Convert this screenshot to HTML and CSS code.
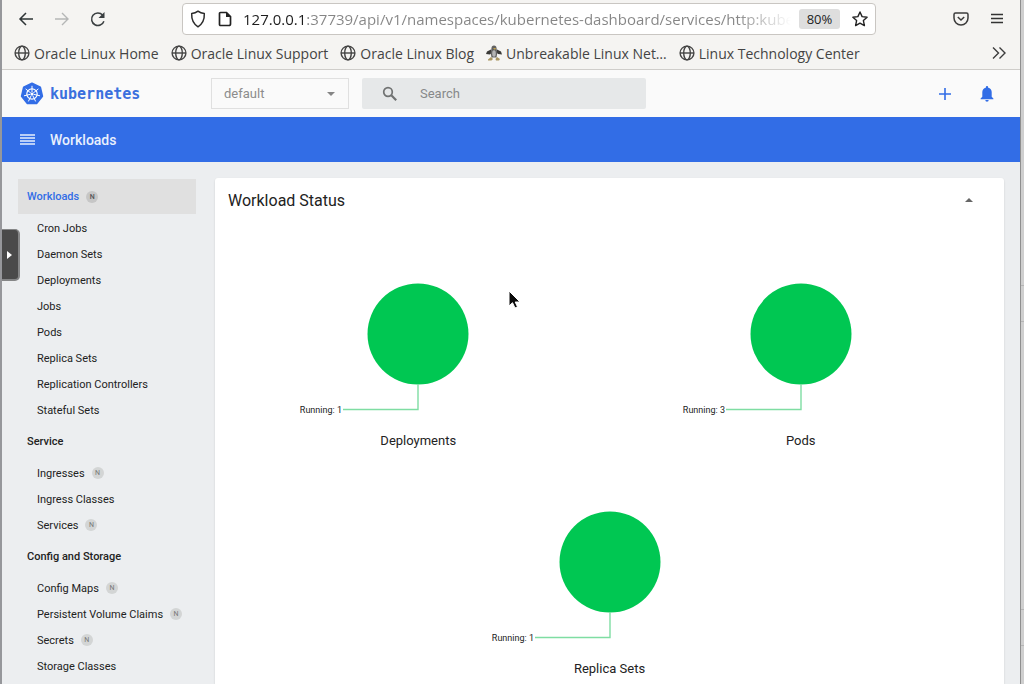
FILE: index.html
```html
<!DOCTYPE html>
<html lang="en">
<head>
<meta charset="utf-8">
<title>Kubernetes Dashboard</title>
<link rel="stylesheet" href="styles.css">
</head>
<body>
<svg class="defs" aria-hidden="true">
  <symbol id="globe" viewBox="0 0 16 16"><g fill="none" stroke="currentColor" stroke-width="1.4"><circle cx="8" cy="8" r="6.9"/><ellipse cx="8" cy="8" rx="3.3" ry="6.9"/><path d="M1 8h14"/></g></symbol>
</svg>
<div class="window">
  <div class="browser">
    <div class="toolbar">
      <div class="nav">
        <button class="icon-btn" aria-label="Back"><svg width="16" height="16" viewBox="0 0 16 16"><path d="M15 8H2M8 2L2 8l6 6" fill="none" stroke="#2e3436" stroke-width="1.5"/></svg></button>
        <button class="icon-btn" aria-label="Forward" disabled><svg width="16" height="16" viewBox="0 0 16 16"><path d="M1 8h13M8 2l6 6-6 6" fill="none" stroke="#b5b6b6" stroke-width="1.4"/></svg></button>
        <button class="icon-btn" aria-label="Reload"><svg width="16" height="16" viewBox="0 0 16 16"><path d="M13.9 10.2A6.3 6.3 0 1 1 12.6 4" fill="none" stroke="#3a3f41" stroke-width="1.5"/><path d="M14.500 1v6H8.500z" fill="#3a3f41"/></svg></button>
      </div>
      <div class="urlbar">
        <svg width="16" height="18" viewBox="0 0 16 18"><path d="M8 1.2c2 1.6 4 2.2 6.3 2.4C14.600 9.500 12.300 14 8 16.800 3.700 14 1.400 9.500 1.700 3.600 4 3.400 6 2.800 8 1.200z" fill="none" stroke="#2b2b2b" stroke-width="1.500" stroke-linejoin="round"/></svg>
        <svg width="14" height="16" viewBox="0 0 14 16"><path d="M2.500 1.500h6l4 4v7.500a1.500 1.500 0 0 1-1.500 1.500h-8.500a1 1 0 0 1-1-1v-11a1 1 0 0 1 1-1z" fill="none" stroke="#222" stroke-width="1.700"/><path d="M8 1v5h5z" fill="#222"/></svg>
        <input class="url" type="text" aria-label="Address" value="127.0.0.1:37739/api/v1/namespaces/kubernetes-dashboard/services/http:kubernetes">
        <button class="zoom">80%</button>
        <button class="icon-btn" aria-label="Bookmark this page"><svg width="16" height="16" viewBox="0 0 16 16"><path d="M8 1l2.100 4.600 5 .6-3.700 3.400 1 5L8 12.100l-4.400 2.500 1-5L.9 6.200l5-.6z" fill="none" stroke="#222" stroke-width="1.400" stroke-linejoin="round"/></svg></button>
      </div>
      <div class="actions">
        <button class="icon-btn" aria-label="Save to Pocket"><svg width="16" height="14" viewBox="0 0 16 14"><path d="M2.500 1h11a1.500 1.500 0 0 1 1.500 1.500V6A7 7 0 0 1 1 6V2.500A1.500 1.500 0 0 1 2.500 1z" fill="none" stroke="#3c3c3c" stroke-width="1.500"/><path d="M4.800 5L8 8l3.200-3" fill="none" stroke="#3c3c3c" stroke-width="1.500"/></svg></button>
        <button class="icon-btn" aria-label="Open menu"><svg width="12" height="12" viewBox="0 0 12 12"><path d="M0 1.500h12M0 5.500h12M0 9.500h12" stroke="#333" stroke-width="1.300"/></svg></button>
      </div>
    </div>
    <nav class="bookmarks" aria-label="Bookmarks">
      <a href="#"><svg width="16" height="16"><use href="#globe"/></svg>Oracle Linux Home</a>
      <a href="#"><svg width="16" height="16"><use href="#globe"/></svg>Oracle Linux Support</a>
      <a href="#"><svg width="16" height="16"><use href="#globe"/></svg>Oracle Linux Blog</a>
      <a href="#"><svg width="16" height="16" viewBox="0 0 16 16"><path d="M5 4.500L1 6.500 0 9l4 .5 1-1zM11 4.500l4 2 1 3-4-.5-1-1z" fill="#3b3a38"/><path d="M5.500 3Q5.500.5 8 .5T10.500 3l.8 5-.8 4.500h-5L4.700 8z" fill="#626262"/><ellipse cx="8" cy="8.500" rx="1.800" ry="3.300" fill="#b4b4b4"/><path d="M7 3h3l-1 2z" fill="#c3a24a"/><path d="M2 14.500l3-2.500 2 2-1.500 1.500H2zM9.500 14l1.500-2 3 2-1 1.500h-3z" fill="#a99560"/></svg>Unbreakable Linux Net…</a>
      <a href="#"><svg width="16" height="16"><use href="#globe"/></svg>Linux Technology Center</a>
      <button class="icon-btn more" aria-label="More bookmarks"><svg width="14" height="12" viewBox="0 0 14 12"><path d="M1 .5L6.500 6 1 11.500M7.500.5L13 6l-5.500 5.500" fill="none" stroke="#3c3c3c" stroke-width="1.400"/></svg></button>
    </nav>
  </div>

  <header class="k-header">
    <a class="brand" href="#">
      <svg width="24" height="24" viewBox="0 0 24 24"><path d="M12 1.200l8.300 4 2.100 9-5.800 7.300H7.400l-5.800-7.300 2.100-9z" fill="#326de6" stroke="#326de6" stroke-width="1.600" stroke-linejoin="round"/><g fill="none" stroke="#fff"><circle cx="12" cy="12" r="5.200" stroke-width="1.200"/><g stroke-width="1"><path d="M12 10.500V3.800M13.200 11l5.200-4.100M13.500 12.300l6.500 1.500M12.700 13.400l2.900 6M11.300 13.400l-2.900 6M10.500 12.300L4 13.800M10.800 11L5.600 6.900"/></g></g><circle cx="12" cy="12" r="1.300" fill="#fff"/></svg>
      <span>kubernetes</span>
    </a>
    <div class="namespace">
      <select aria-label="Namespace"><option>default</option></select>
      <svg width="8" height="4" viewBox="0 0 8 4"><path d="M0 0h8L4 4z" fill="#858585"/></svg>
    </div>
    <label class="search">
      <svg width="16" height="16" viewBox="0 0 16 16"><circle cx="6" cy="6" r="4.300" fill="none" stroke="#707272" stroke-width="1.700"/><path d="M9.300 9.300l4.900 4.900" stroke="#707272" stroke-width="2.200"/></svg>
      <input type="text" placeholder="Search" aria-label="Search">
    </label>
    <div class="header-actions">
      <button class="icon-btn" aria-label="Create new resource"><svg width="12" height="12" viewBox="0 0 12 12"><path d="M6 0v12M0 6h12" stroke="#326de6" stroke-width="1.600"/></svg></button>
      <button class="icon-btn" aria-label="Notifications"><svg width="14" height="16" viewBox="0 0 14 16"><path d="M7 0a1.200 1.200 0 0 1 1.200 1.200v.5A4.600 4.600 0 0 1 11.700 6v4.700L13.400 12.500v.7H.6v-.7l1.700-1.800V6a4.600 4.600 0 0 1 3.500-4.300v-.5A1.200 1.200 0 0 1 7 0zM5.300 14h3.400a1.700 1.700 0 0 1-3.400 0z" fill="#326de6"/></svg></button>
    </div>
  </header>

  <div class="titlebar">
    <button class="icon-btn" aria-label="Toggle navigation"><svg width="15" height="11" viewBox="0 0 15 11"><path d="M0 1h15M0 4h15M0 7h15M0 10h15" stroke="#e6eefd" stroke-width="1.400"/></svg></button>
    <h1>Workloads</h1>
  </div>

  <div class="page">
    <nav class="sidebar" aria-label="Resources">
      <a class="group active" href="#">Workloads<span class="badge">N</span></a>
      <a href="#">Cron Jobs</a>
      <a href="#">Daemon Sets</a>
      <a href="#">Deployments</a>
      <a href="#">Jobs</a>
      <a href="#">Pods</a>
      <a href="#">Replica Sets</a>
      <a href="#">Replication Controllers</a>
      <a href="#">Stateful Sets</a>
      <a class="group" href="#">Service</a>
      <a href="#">Ingresses<span class="badge">N</span></a>
      <a href="#">Ingress Classes</a>
      <a href="#">Services<span class="badge">N</span></a>
      <a class="group" href="#">Config and Storage</a>
      <a href="#">Config Maps<span class="badge">N</span></a>
      <a href="#">Persistent Volume Claims<span class="badge">N</span></a>
      <a href="#">Secrets<span class="badge">N</span></a>
      <a href="#">Storage Classes</a>
    </nav>
    <main class="card">
      <div class="card-head">
        <h2>Workload Status</h2>
        <button class="icon-btn" aria-label="Collapse"><svg width="8" height="4" viewBox="0 0 8 4"><path d="M0 4h8L4 0z" fill="#666"/></svg></button>
      </div>
      <div class="charts">
        <figure>
          <svg width="300" height="209"><circle cx="150" cy="112" r="50.500" fill="#00c752"/><path d="M150 162v25.500H75" fill="none" stroke="#7fdda3" stroke-width="1.400"/><text x="74" y="191" text-anchor="end">Running: 1</text></svg>
          <figcaption>Deployments</figcaption>
        </figure>
        <figure>
          <svg width="300" height="209"><circle cx="150" cy="112" r="50.500" fill="#00c752"/><path d="M150 162v25.500H75" fill="none" stroke="#7fdda3" stroke-width="1.400"/><text x="74" y="191" text-anchor="end">Running: 3</text></svg>
          <figcaption>Pods</figcaption>
        </figure>
        <figure>
          <svg width="300" height="209"><circle cx="150" cy="112" r="50.500" fill="#00c752"/><path d="M150 162v25.500H75" fill="none" stroke="#7fdda3" stroke-width="1.400"/><text x="74" y="191" text-anchor="end">Running: 1</text></svg>
          <figcaption>Replica Sets</figcaption>
        </figure>
      </div>
    </main>
  </div>
</div>
<div class="desktop-edge"><span></span><span></span></div>
<button class="drawer" aria-label="Open panel"><svg width="5" height="8" viewBox="0 0 5 8"><path d="M0 0l5 4-5 4z" fill="#fff"/></svg></button>
<svg class="cursor" width="14" height="20" viewBox="0 0 14 20" aria-hidden="true"><path d="M1 1v15l3.500-3.300L7 18l2.500-1.200L7.200 12H12z" fill="#0b0b0b" stroke="#fff" stroke-width="1"/></svg>
</body>
</html>
```

FILE: styles.css
```css
* {
  box-sizing: border-box;
}

body {
  margin: 0;
  height: 100vh;
  overflow: hidden;
  display: flex;
  position: relative;
  background: #cfcfcf;
  font-family: Roboto, "Liberation Sans", sans-serif;
  color: #222;
}

button,
input,
select {
  font: inherit;
  color: inherit;
  border: 0;
  padding: 0;
  margin: 0;
  background: none;
}

a {
  color: inherit;
  text-decoration: none;
}

svg {
  display: block;
  flex: none;
}

h1,
h2,
figure {
  margin: 0;
}

.defs {
  position: absolute;
  width: 0;
  height: 0;
}

.window {
  flex: 1;
  min-width: 0;
  display: flex;
  flex-direction: column;
  border-left: 2px solid #96979b;
  border-right: 1px solid #8f8f8f;
  background: #eceef0;
}

.icon-btn {
  display: flex;
  align-items: center;
  justify-content: center;
}

/* Browser chrome */
.browser {
  flex: none;
  background: #f5f4f2;
  border-bottom: 1px solid #cfcdca;
  font-family: "Open Sans", "Noto Sans", sans-serif;
}

.toolbar {
  display: flex;
  align-items: center;
  height: 37px;
  padding: 0 17px 0 16px;
}

.nav {
  display: flex;
  gap: 20px;
  width: 164px;
}

.urlbar {
  flex: 1;
  min-width: 0;
  display: flex;
  align-items: center;
  height: 32px;
  padding: 0 7px;
  border: 1px solid #c9c6c2;
  border-radius: 4px;
  background: #fff;
}

.urlbar > svg + svg {
  margin-left: 12px;
}

.url {
  flex: 1;
  min-width: 0;
  height: 28px;
  margin: 0 8px 0 11px;
  font-size: 15px;
  outline: 0;
  -webkit-text-fill-color: transparent;
  background: linear-gradient(to right, #1d1d1d 64px, #858585 64px, #858585 90%, #fff 100%);
  -webkit-background-clip: text;
  background-clip: text;
}

.zoom {
  height: 20px;
  width: 41px;
  margin-right: 12px;
  border-radius: 3px;
  background: #dedede;
  font-size: 13px;
  line-height: 20px;
}

.actions {
  display: flex;
  justify-content: flex-end;
  gap: 22px;
  width: 127px;
}

.bookmarks {
  display: flex;
  align-items: center;
  gap: 12px;
  height: 32px;
  padding: 0 14px 0 12px;
  font-size: 14px;
  color: #444;
}

.bookmarks a {
  display: flex;
  align-items: center;
  gap: 4px;
  white-space: nowrap;
}

.more {
  margin-left: auto;
}

/* Dashboard header */
.k-header {
  flex: none;
  display: flex;
  align-items: center;
  height: 47px;
  padding: 0 26px 0 18px;
  background: #fafafa;
}

.brand {
  display: flex;
  align-items: center;
  gap: 6px;
  width: 191px;
  font: bold 15px "DejaVu Sans Mono", monospace;
  color: #3a70de;
}

.namespace {
  display: flex;
  align-items: center;
  width: 138px;
  height: 31px;
  margin-right: 13px;
  padding: 0 13px 0 12px;
  border: 1px solid #e0e0e0;
}

.namespace select {
  flex: 1;
  appearance: none;
  font-size: 13px;
  color: #8c8c8c;
}

.search {
  display: flex;
  align-items: center;
  gap: 22px;
  width: 284px;
  height: 31px;
  padding: 0 20px;
  border-radius: 2px;
  background: #e6e8e9;
}

.search input {
  flex: 1;
  min-width: 0;
  font-size: 13px;
}

.search input::placeholder {
  color: #868889;
}

.header-actions {
  display: flex;
  align-items: center;
  gap: 29px;
  margin-left: auto;
}

.titlebar {
  flex: none;
  display: flex;
  align-items: center;
  gap: 15px;
  height: 45px;
  padding: 0 18px;
  background: #326de6;
  color: #e9f0fd;
}

.titlebar h1 {
  font-size: 14px;
  font-weight: 500;
}

/* Content */
.page {
  flex: 1;
  min-height: 0;
  display: flex;
  gap: 19px;
  padding: 16px 16px 0;
}

.sidebar {
  flex: none;
  width: 178px;
  padding-top: 1px;
  font-size: 11px;
}

.sidebar a {
  display: flex;
  align-items: center;
  gap: 7px;
  height: 26px;
  padding-left: 19px;
}

.sidebar .group {
  height: 37px;
  padding-left: 9px;
  font-weight: 500;
}

.sidebar .active {
  height: 35px;
  margin-bottom: 1px;
  background: #e0e0e0;
  color: #326de6;
}

.badge {
  width: 12px;
  height: 12px;
  border-radius: 50%;
  background: #d3d5d5;
  color: #777;
  font-size: 7px;
  line-height: 13px;
  text-align: center;
}

.active .badge {
  background: #c6c6c6;
  color: #555;
}

.card {
  flex: 1;
  min-width: 0;
  padding: 0 12px;
  background: #fff;
  border-radius: 3px 3px 0 0;
  box-shadow: 0 1px 2px rgba(0, 0, 0, 0.15);
}

.card-head {
  display: flex;
  align-items: center;
  justify-content: space-between;
  height: 44px;
  padding: 0 19px 0 1px;
}

.card-head h2 {
  font-size: 16px;
  font-weight: 400;
}

.charts {
  display: flex;
  flex-wrap: wrap;
  justify-content: center;
}

.charts figure {
  width: 50%;
  height: 228px;
  display: flex;
  flex-direction: column;
  align-items: center;
}

.charts text {
  font-size: 9px;
  fill: #222;
}

.charts figcaption {
  font-size: 13px;
  line-height: 20px;
}

/* Overlays and desktop edge */
.desktop-edge {
  flex: none;
  display: flex;
  flex-direction: column;
  justify-content: space-between;
  width: 3px;
  padding: 285px 0 38px;
}

.desktop-edge span {
  height: 37px;
  border: 1px solid #b5b5b5;
  border-width: 1px 0;
}

.drawer {
  position: absolute;
  left: 2px;
  top: 229px;
  width: 18px;
  height: 52px;
  padding-left: 5px;
  border: 2px solid #858687;
  border-width: 1px 2px 2px 0;
  border-radius: 0 5px 5px 0;
  background: #4a4a4a;
}

.cursor {
  position: absolute;
  left: 508px;
  top: 290px;
}
```
